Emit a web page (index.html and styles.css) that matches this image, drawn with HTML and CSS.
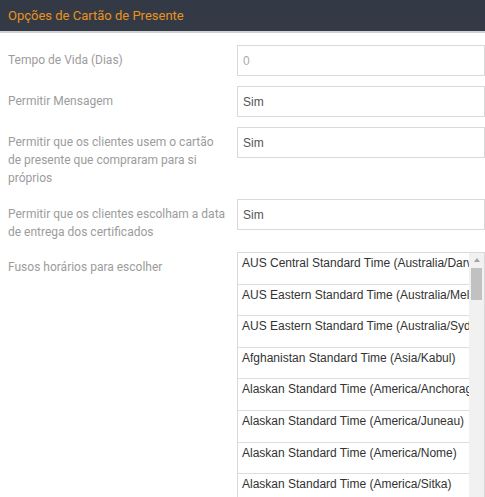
FILE: index.html
```html
<!DOCTYPE html>
<html lang="pt">
<head>
<meta charset="utf-8">
<title>Opções de Cartão de Presente</title>
<link rel="stylesheet" href="styles.css">
</head>
<body>
<div class="panel">
  <div class="panel-header">Opções de Cartão de Presente</div>
  <div class="panel-body">
    <div class="row">
      <label class="label">Tempo de Vida (Dias)</label>
      <div class="input placeholder">0</div>
    </div>
    <div class="row">
      <label class="label">Permitir Mensagem</label>
      <div class="input">Sim</div>
    </div>
    <div class="row">
      <label class="label">Permitir que os clientes usem o cartão de presente que compraram para si próprios</label>
      <div class="input">Sim</div>
    </div>
    <div class="row">
      <label class="label">Permitir que os clientes escolham a data de entrega dos certificados</label>
      <div class="input">Sim</div>
    </div>
    <div class="row">
      <label class="label">Fusos horários para escolher</label>
      <div class="listbox">
        <div class="options">
          <div class="option">AUS Central Standard Time (Australia/Darwin)</div>
          <div class="option">AUS Eastern Standard Time (Australia/Melbourne)</div>
          <div class="option">AUS Eastern Standard Time (Australia/Sydney)</div>
          <div class="option">Afghanistan Standard Time (Asia/Kabul)</div>
          <div class="option">Alaskan Standard Time (America/Anchorage)</div>
          <div class="option">Alaskan Standard Time (America/Juneau)</div>
          <div class="option">Alaskan Standard Time (America/Nome)</div>
          <div class="option">Alaskan Standard Time (America/Sitka)</div>
          <div class="option">Aleutian Standard Time (America/Adak)</div>
        </div>
        <div class="scrollbar">
          <div class="arrow"></div>
          <div class="thumb"></div>
        </div>
      </div>
    </div>
  </div>
</div>
</body>
</html>
```
FILE: styles.css
```css
html, body {
  margin: 0;
  padding: 0;
  height: 497px;
  overflow: hidden;
  background: #fff;
}
.panel {
  width: 485px;
}
.panel-header {
  height: 31px;
  background: #343a45;
  border-bottom: 2px solid #cfd1d4;
  color: #e8921e;
  font-family: Roboto, "Liberation Sans", sans-serif;
  font-size: 13px;
  line-height: 32px;
  padding-left: 8px;
}
.panel-body {
  padding: 12px 0 0 8px;
}
.row {
  display: grid;
  grid-template-columns: 221px 248px;
  column-gap: 8px;
  align-items: start;
  margin-bottom: 10px;
}
.label {
  font-family: Roboto, "Liberation Sans", sans-serif;
  font-size: 12px;
  line-height: 18px;
  color: #9c9c9c;
  padding-top: 6px;
  padding-bottom: 1.5px;
}
.input {
  box-sizing: border-box;
  height: 31px;
  border: 1px solid #d9d9d9;
  font-family: "Liberation Sans", Arial, sans-serif;
  font-size: 12px;
  line-height: 30px;
  padding-left: 5px;
  color: #555;
}
.input.placeholder {
  color: #aaa;
}
.listbox {
  box-sizing: border-box;
  height: 260px;
  border: 1px solid #d9d9d9;
  display: flex;
}
.options {
  flex: 1;
  overflow: hidden;
  min-width: 0;
}
.option {
  box-sizing: border-box;
  height: 31.6px;
  border-bottom: 1px solid #dedede;
  padding: 3px 4px;
  font-family: "Liberation Sans", Arial, sans-serif;
  font-size: 12px;
  line-height: 14px;
  color: #333;
  white-space: nowrap;
  overflow: hidden;
}
.scrollbar {
  width: 15px;
  flex: none;
  background: #f1f1f1;
  display: flex;
  flex-direction: column;
  align-items: center;
}
.arrow {
  margin-top: 5px;
  width: 0;
  height: 0;
  border-left: 3.5px solid transparent;
  border-right: 3.5px solid transparent;
  border-bottom: 4px solid #a3a3a3;
}
.thumb {
  margin-top: 6px;
  width: 11px;
  height: 32px;
  background: #c1c1c1;
}
```
